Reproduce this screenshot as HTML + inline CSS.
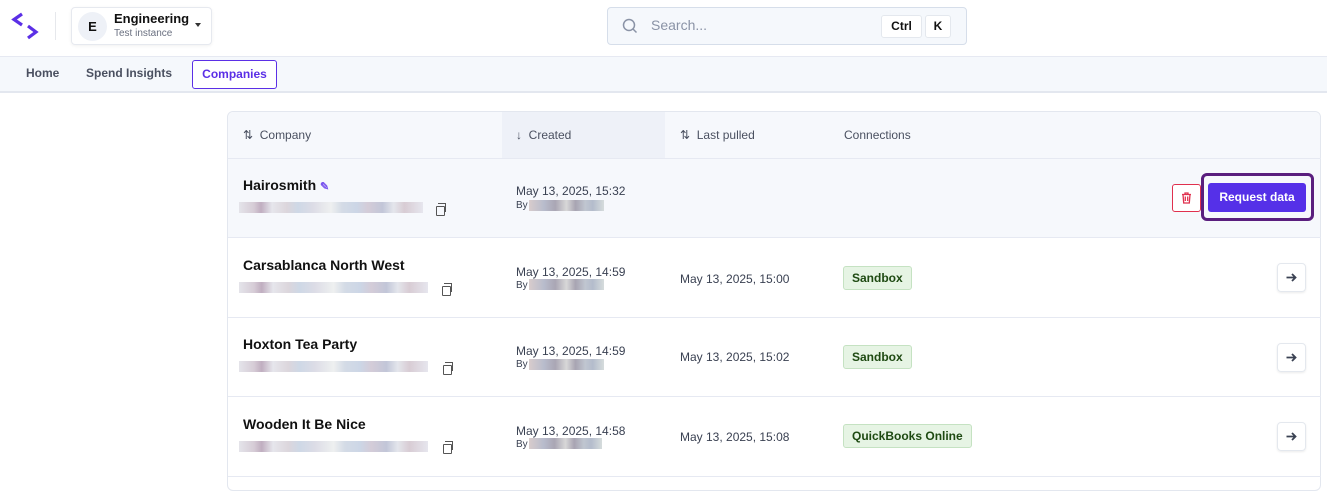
<!DOCTYPE html><html><head><style>
*{box-sizing:border-box;margin:0;padding:0}
body{width:1327px;height:481px;overflow:hidden;background:#fff;font-family:"Liberation Sans",sans-serif;color:#111;position:relative}
.a{position:absolute}
.blur{position:absolute;height:11px;background:linear-gradient(90deg,#e4e4ea,#d6ccd6 8%,#c0aec0 12%,#e6e6ec 18%,#dcd6dc 26%,#ced8e6 32%,#dcdce6 40%,#eef0f0 50%,#d4dbe6 56%,#ccd6e6 64%,#d4ccd8 70%,#c2c6d8 78%,#e4e6ec 84%,#d8ccd4 90%,#e6e6ee)}
.blur2{position:absolute;height:11px;background:linear-gradient(90deg,#d8cccc,#b8bccc 20%,#aaa6b4 35%,#d8d8d8 50%,#a8a4b2 62%,#c0c6d0 75%,#b4bccc 85%,#d6dcdc)}
.nm{font-weight:bold;font-size:14px}
.dt{font-size:12px;color:#3a4152}
.by{font-size:10px;color:#3a4152}
.tag{position:absolute;background:#e6f4e4;border:1px solid #c5e2c2;color:#1e4a12;font-weight:bold;font-size:12px;border-radius:3px;padding:4px 8px}
.arr{position:absolute;left:1277px;width:29px;height:29px;border:1px solid #e4e8ee;border-radius:4px;box-shadow:0 1px 2px rgba(0,0,0,.08)}
.hline{position:absolute;left:228px;width:1093px;height:1px;background:#e6e9f2}
.cp{position:absolute;width:9px;height:10px;border:1.5px solid #555;border-radius:1px}
.cp:before{content:"";position:absolute;left:1px;top:-4px;width:7px;height:8px;border-top:1.5px solid #555;border-right:1.5px solid #555}
</style></head><body>
<svg class="a" style="left:10px;top:11px" width="30" height="30" viewBox="0 0 30 30"><path d="M12 3 L4 8.5 L12 14" stroke="#5b2fe6" stroke-width="3.2" fill="none"/><path d="M18 15 L26 21 L18 27" stroke="#5b2fe6" stroke-width="3.2" fill="none"/></svg>
<div class="a" style="left:55px;top:12px;width:1px;height:28px;background:#e6e8ec"></div>
<div class="a" style="left:71px;top:7px;width:141px;height:38px;border:1px solid #e6e9ef;border-radius:4px;box-shadow:0 1px 3px rgba(0,0,0,.06)"></div>
<div class="a" style="left:78px;top:12px;width:29px;height:29px;border-radius:50%;background:#eef1f7;text-align:center;line-height:29px;font-weight:bold;font-size:13px">E</div>
<div class="a" style="left:114px;top:11px;font-weight:bold;font-size:13px">Engineering</div>
<div class="a" style="left:114px;top:28px;font-size:10px;color:#6a7080">Test instance</div>
<div class="a" style="left:195px;top:23px;border:3.5px solid transparent;border-top:4px solid #333"></div>
<div class="a" style="left:607px;top:7px;width:360px;height:38px;border:1px solid #d6deea;border-radius:4px;background:#f5f8fc"></div>
<svg class="a" style="left:622px;top:18px" width="16" height="16" viewBox="0 0 16 16"><circle cx="7" cy="7" r="5.5" stroke="#8a93a6" stroke-width="1.5" fill="none"/><path d="M11 11L14.5 14.5" stroke="#8a93a6" stroke-width="1.5"/></svg>
<div class="a" style="left:651px;top:17px;font-size:14px;color:#8a93a6">Search...</div>
<div class="a" style="left:881px;top:15px;width:41px;height:23px;background:#fff;border:1px solid #e4e8ee;border-radius:3px;text-align:center;line-height:21px;font-weight:bold;font-size:12px">Ctrl</div>
<div class="a" style="left:925px;top:15px;width:26px;height:23px;background:#fff;border:1px solid #e4e8ee;border-radius:3px;text-align:center;line-height:21px;font-weight:bold;font-size:12px">K</div>
<div class="a" style="left:0;top:56px;width:1327px;height:37px;background:#f5f8fc;border-top:1px solid #e6e9f2;border-bottom:2px solid #e3e7ef"></div>
<div class="a" style="left:26px;top:66px;font-weight:bold;font-size:12px;color:#4a5060">Home</div>
<div class="a" style="left:86px;top:66px;font-weight:bold;font-size:12px;color:#4a5060">Spend Insights</div>
<div class="a" style="left:192px;top:60px;width:85px;height:29px;border:1px solid #5b2fe6;border-radius:3px;background:#fff;text-align:center;line-height:27px;font-weight:bold;font-size:12px;color:#5b2fe6">Companies</div>
<div class="a" style="left:227px;top:111px;width:1094px;height:380px;border:1px solid #e3e7ef;border-radius:6px"></div>
<div class="a" style="left:228px;top:112px;width:1092px;height:126px;background:#f6f8fc;border-radius:6px 6px 0 0"></div>
<div class="a" style="left:502px;top:112px;width:163px;height:46px;background:#eef1f8"></div>
<div class="hline" style="top:158px"></div>
<div class="a" style="left:243px;top:128px;font-size:12px;color:#4a5060">⇅&nbsp; Company</div>
<div class="a" style="left:516px;top:128px;font-size:12px;color:#4a5060">↓&nbsp; Created</div>
<div class="a" style="left:680px;top:128px;font-size:12px;color:#4a5060">⇅&nbsp; Last pulled</div>
<div class="a" style="left:844px;top:128px;font-size:12px;color:#4a5060">Connections</div>
<div class="a nm" style="left:243px;top:177px">Hairosmith <span style="color:#7a55ee;font-size:11px">✎</span></div>
<div class="blur" style="left:239px;top:202px;width:184px"></div><div class="cp" style="left:436px;top:206px"></div>
<div class="a dt" style="left:516px;top:184px">May 13, 2025, 15:32</div>
<div class="a by" style="left:516px;top:200px">By</div><div class="blur2" style="left:529px;top:200px;width:75px"></div>
<div class="a" style="left:1172px;top:184px;width:29px;height:28px;border:1px solid #e0304e;border-radius:3px;background:#fff"></div>
<svg class="a" style="left:1181px;top:192px" width="11" height="12" viewBox="0 0 11 12"><path d="M1 2.5H10M4 2.5V1H7V2.5M2 2.5L2.7 11H8.3L9 2.5M4.3 4.5V9M6.7 4.5V9" stroke="#e0304e" stroke-width="1.3" fill="none"/></svg>
<div class="a" style="left:1201px;top:173px;width:113px;height:48px;border:3px solid #5a1e7e;border-radius:6px"></div>
<div class="a" style="left:1208px;top:183px;width:98px;height:29px;background:#5530e8;border-radius:3px;color:#fff;font-weight:bold;font-size:12px;text-align:center;line-height:29px">Request data</div>
<div class="hline" style="top:237px"></div>
<div class="a nm" style="left:243px;top:257px">Carsablanca North West</div>
<div class="blur" style="left:239px;top:282px;width:189px"></div><div class="cp" style="left:442px;top:286px"></div>
<div class="a dt" style="left:516px;top:265px">May 13, 2025, 14:59</div>
<div class="a by" style="left:516px;top:280px">By</div><div class="blur2" style="left:529px;top:279px;width:75px"></div>
<div class="a dt" style="left:680px;top:272px">May 13, 2025, 15:00</div>
<div class="tag" style="left:843px;top:266px">Sandbox</div>
<div class="arr" style="top:263px"><svg width="27" height="27" viewBox="0 0 27 27"><path d="M8.5 13.5H17.5M14 10L17.5 13.5L14 17" stroke="#3a4152" stroke-width="1.8" fill="none"/></svg></div>
<div class="hline" style="top:317px"></div>
<div class="a nm" style="left:243px;top:336px">Hoxton Tea Party</div>
<div class="blur" style="left:239px;top:361px;width:189px"></div><div class="cp" style="left:443px;top:365px"></div>
<div class="a dt" style="left:516px;top:344px">May 13, 2025, 14:59</div>
<div class="a by" style="left:516px;top:359px">By</div><div class="blur2" style="left:529px;top:359px;width:75px"></div>
<div class="a dt" style="left:680px;top:350px">May 13, 2025, 15:02</div>
<div class="tag" style="left:843px;top:345px">Sandbox</div>
<div class="arr" style="top:343px"><svg width="27" height="27" viewBox="0 0 27 27"><path d="M8.5 13.5H17.5M14 10L17.5 13.5L14 17" stroke="#3a4152" stroke-width="1.8" fill="none"/></svg></div>
<div class="hline" style="top:396px"></div>
<div class="a nm" style="left:243px;top:416px">Wooden It Be Nice</div>
<div class="blur" style="left:239px;top:441px;width:189px"></div><div class="cp" style="left:443px;top:444px"></div>
<div class="a dt" style="left:516px;top:424px">May 13, 2025, 14:58</div>
<div class="a by" style="left:516px;top:439px">By</div><div class="blur2" style="left:529px;top:438px;width:73px"></div>
<div class="a dt" style="left:680px;top:430px">May 13, 2025, 15:08</div>
<div class="tag" style="left:843px;top:424px">QuickBooks Online</div>
<div class="arr" style="top:422px"><svg width="27" height="27" viewBox="0 0 27 27"><path d="M8.5 13.5H17.5M14 10L17.5 13.5L14 17" stroke="#3a4152" stroke-width="1.8" fill="none"/></svg></div>
<div class="hline" style="top:476px"></div>
</body></html>
